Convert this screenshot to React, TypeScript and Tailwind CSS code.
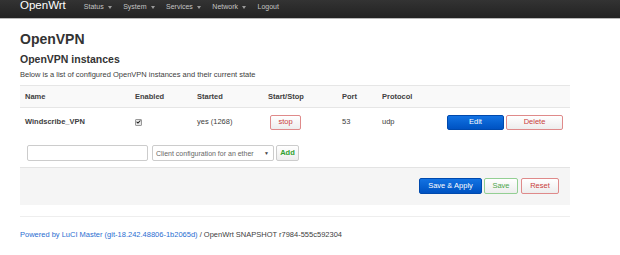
import { Check } from 'lucide-react';

const navItems = ['Status', 'System', 'Services', 'Network'];

// Small bootstrap-style dropdown caret
function Caret() {
  return <span className="ml-[4px] mt-[1px] inline-block w-0 h-0 border-l-[2.5px] border-r-[2.5px] border-t-[3px] border-l-transparent border-r-transparent border-t-[#999]" />;
}

const btn = 'h-[15px] flex items-center justify-center rounded-[2px] text-[7.5px] leading-none border';
const btnLight = 'bg-gradient-to-b from-white to-[#ededed]';
const btnBlue = 'bg-gradient-to-b from-[#1373e3] to-[#0052c2] border-[#0049ad] text-white';
const btnRed = `${btnLight} border-[#df8a8a] text-[#c9403b]`;
const btnGreen = `${btnLight} border-[#93cf93] text-[#4ca64c]`;

export default function App() {
  return (
    <div className="w-[620px] h-[255px] overflow-hidden bg-white text-[#404040] font-['Liberation_Sans',Arial,sans-serif]">
      {/* Top bar */}
      <header className="h-[19px] bg-gradient-to-b from-[#333333] to-[#222222] border-b border-[#b8b8b8] flex items-start pl-[20px]">
        <span className="text-[11.5px] leading-none text-white">OpenWrt</span>
        <nav className="flex items-center gap-[11.5px] ml-[18px] mt-[3px] text-[7px] leading-none text-[#c4c4c4]">
          {navItems.map((item) => (
            <span key={item} className="flex items-center">
              {item}
              <Caret />
            </span>
          ))}
          <span>Logout</span>
        </nav>
      </header>

      <main className="px-[20px]">
        <h2 className="mt-[13px] text-[14px] leading-none font-bold text-[#333]">OpenVPN</h2>
        <h3 className="mt-[7.5px] text-[10.5px] leading-none font-bold text-[#333]">OpenVPN instances</h3>
        <p className="mt-[7px] text-[7.5px] leading-none">Below is a list of configured OpenVPN instances and their current state</p>

        {/* Instances table */}
        <div className="mt-[6.5px] w-[550px] text-[7.5px] leading-none">
          <div className="grid grid-cols-[110px_62px_71px_74px_40px_65px_1fr] h-[23px] items-center bg-[#f9f9f9] border-y border-[#e6e6e6] font-bold">
            <div className="pl-[5px]">Name</div>
            <div className="pl-[5px]">Enabled</div>
            <div className="pl-[5px]">Started</div>
            <div className="pl-[5px]">Start/Stop</div>
            <div className="pl-[5px]">Port</div>
            <div className="pl-[5px]">Protocol</div>
            <div />
          </div>
          <div className="grid grid-cols-[110px_62px_71px_74px_40px_65px_1fr] h-[28px] items-center">
            <div className="pl-[5px] font-bold">Windscribe_VPN</div>
            <div className="pl-[5px]">
              <span className="w-[7px] h-[7px] flex items-center justify-center border border-[#999] bg-[#e8e8e8] rounded-[1px]">
                <Check className="w-[6px] h-[6px] text-[#222]" strokeWidth={5} />
              </span>
            </div>
            <div className="pl-[5px]">yes (1268)</div>
            <div className="pl-[7px]">
              <button className={`${btn} ${btnRed} w-[31px]`}>stop</button>
            </div>
            <div className="pl-[5px]">53</div>
            <div className="pl-[5px]">udp</div>
            <div className="pl-[5px] flex gap-[2px]">
              <button className={`${btn} ${btnBlue} w-[57px]`}>Edit</button>
              <button className={`${btn} ${btnRed} w-[57px]`}>Delete</button>
            </div>
          </div>
        </div>

        {/* Add instance row */}
        <div className="mt-[9px] ml-[7px] flex items-center h-[16px] text-[7px] leading-none">
          <div className="w-[121px] h-[16px] border border-[#ccc] rounded-[2px] bg-white" />
          <div className="ml-[4px] w-[122px] h-[16px] border border-[#ccc] rounded-[2px] bg-white flex items-center justify-between pl-[3px] pr-[4px] text-[#666]">
            <span>Client configuration for an ether</span>
            <span className="text-[5px] text-[#444]">▼</span>
          </div>
          <button className="ml-[2px] w-[23px] h-[16px] border border-[#ccc] rounded-[2px] bg-gradient-to-b from-white to-[#eee] text-[7.5px] font-bold text-[#2ea12e] flex items-center justify-center">
            Add
          </button>
        </div>

        {/* Form actions */}
        <div className="mt-[6px] w-[550px] h-[38px] bg-[#f5f5f5] border-t border-[#e3e3e3] flex items-start justify-end pt-[10px] pr-[11px] gap-[2px]">
          <button className={`${btn} ${btnBlue} w-[63px] h-[16px]`}>Save &amp; Apply</button>
          <button className={`${btn} ${btnGreen} w-[34px] h-[16px]`}>Save</button>
          <button className={`${btn} ${btnRed} w-[38px] h-[16px] ml-[1px]`}>Reset</button>
        </div>

        {/* Footer */}
        <footer className="mt-[11px] w-[550px] border-t border-[#eeeeee] pt-[14px] text-[7.5px] leading-none">
          <span className="text-[#2a6ed1]">Powered by LuCI Master (git-18.242.48806-1b2065d)</span>
          <span> / OpenWrt SNAPSHOT r7984-555c592304</span>
        </footer>
      </main>
    </div>
  );
}
